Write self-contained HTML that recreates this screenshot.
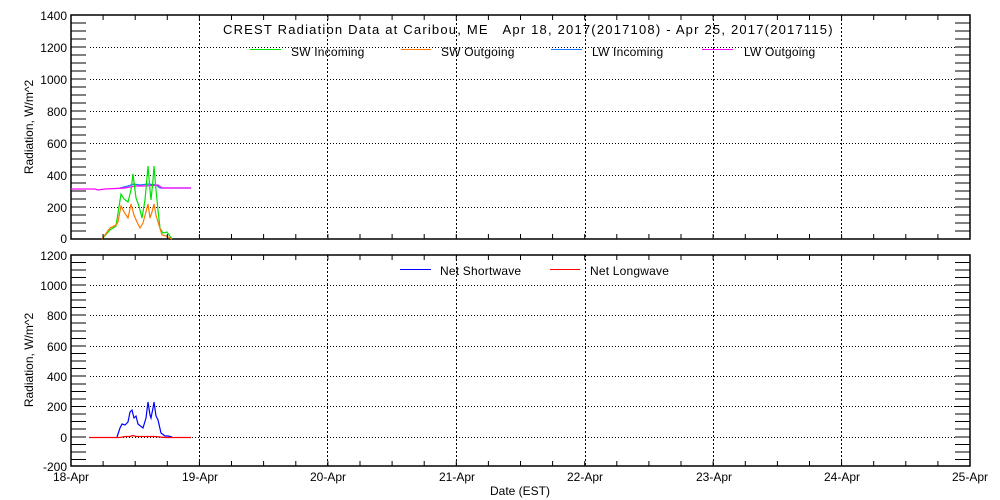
<!DOCTYPE html>
<html><head><style>
html,body{margin:0;padding:0;background:#fff;}
svg{display:block;font-family:"Liberation Sans",sans-serif;}
text{font-size:12px;fill:#000;}
</style></head><body>
<svg width="1000" height="500" viewBox="0 0 1000 500" xmlns="http://www.w3.org/2000/svg">
<g stroke="#000" stroke-width="1.5" fill="none">
<rect x="71" y="15" width="899" height="224"/>
<rect x="71" y="255" width="899" height="211"/>
</g>
<g stroke="#000" stroke-width="1" stroke-dasharray="2,2">
<line x1="199.5" y1="15" x2="199.5" y2="239"/><line x1="327.5" y1="15" x2="327.5" y2="239"/><line x1="456.5" y1="15" x2="456.5" y2="239"/><line x1="585.5" y1="15" x2="585.5" y2="239"/><line x1="713.5" y1="15" x2="713.5" y2="239"/><line x1="841.5" y1="15" x2="841.5" y2="239"/>
<line x1="199.5" y1="255" x2="199.5" y2="466"/><line x1="327.5" y1="255" x2="327.5" y2="466"/><line x1="456.5" y1="255" x2="456.5" y2="466"/><line x1="585.5" y1="255" x2="585.5" y2="466"/><line x1="713.5" y1="255" x2="713.5" y2="466"/><line x1="841.5" y1="255" x2="841.5" y2="466"/>
</g>
<g stroke="#000" stroke-width="1" stroke-dasharray="1,2">
<line x1="90" y1="47.5" x2="955" y2="47.5"/><line x1="90" y1="79.5" x2="955" y2="79.5"/><line x1="90" y1="111.5" x2="955" y2="111.5"/><line x1="90" y1="143.5" x2="955" y2="143.5"/><line x1="90" y1="175.5" x2="955" y2="175.5"/><line x1="90" y1="207.5" x2="955" y2="207.5"/>
<line x1="90" y1="285.5" x2="955" y2="285.5"/><line x1="90" y1="315.5" x2="955" y2="315.5"/><line x1="90" y1="346.5" x2="955" y2="346.5"/><line x1="90" y1="376.5" x2="955" y2="376.5"/><line x1="90" y1="406.5" x2="955" y2="406.5"/><line x1="90" y1="437.5" x2="955" y2="437.5"/>
</g>
<g fill="none" stroke-width="1.2">
<polyline stroke="#1e78ff" points="120,188 128,186 134,184 140,185 148,184 156,185 160,188 191,188"/>
<polyline stroke="#ff00ff" points="71,189 95,189 98,190 105,189 125,188 135,186 145,186 158,185 162,188 191,188"/>
<polyline stroke="#00e000" points="102,239 110,230 116,226 121,194 124,199 128,202 131,190 133,174 136,198 139,206 142,218 145,200 148,166 150,190 151,200 153,180 154,166 156,190 158,210 160,228 163,233 167,232 172,239"/>
<polyline stroke="#ff7800" points="102,239 110,228 116,225 118,222 121,206 124,212 128,218 131,204 134,215 137,222 140,228 143,223 148,204 150,218 152,212 154,204 156,215 158,222 162,235 166,236 172,239"/>
</g>
<g fill="none" stroke-width="1.2">
<polyline stroke="#0000ff" points="117,437 120,428 122,424 125,425 128,422 130,412 132,410 134,418 136,416 138,424 143,428 146,418 148,402 150,415 151,418 153,408 154,402 156,416 158,420 161,433 165,436 168,436 172,437"/>
<polyline stroke="#ff0000" points="89,437.5 120,437.5 125,436.5 130,436.5 133,435.5 136,436.5 145,436.5 155,436.5 165,437.5 191,437.5"/>
</g>
<g stroke-width="1">
<line x1="250" y1="49.5" x2="281" y2="49.5" stroke="#00e000"/>
<line x1="401" y1="49.5" x2="431" y2="49.5" stroke="#ff7800"/>
<line x1="551" y1="49.5" x2="582" y2="49.5" stroke="#1e78ff"/>
<line x1="702" y1="49.5" x2="733" y2="49.5" stroke="#ff00ff"/>
<line x1="400" y1="269.5" x2="431" y2="269.5" stroke="#0000ff"/>
<line x1="550" y1="269.5" x2="580" y2="269.5" stroke="#ff0000"/>
</g>
<text x="223" y="34" style="font-size:13px;letter-spacing:1.2px">CREST Radiation Data at Caribou, ME &#160; Apr 18, 2017(2017108) - Apr 25, 2017(2017115)</text>
<g style="letter-spacing:0.2px">
<text x="291" y="56">SW Incoming</text>
<text x="441" y="56">SW Outgoing</text>
<text x="592" y="56">LW Incoming</text>
<text x="744" y="56">LW Outgoing</text>
<text x="440" y="275">Net Shortwave</text>
<text x="590" y="275">Net Longwave</text>
</g>
<g text-anchor="end">
<text x="67" y="20">1400</text><text x="67" y="52">1200</text><text x="67" y="84">1000</text><text x="67" y="116">800</text><text x="67" y="148">600</text><text x="67" y="180">400</text><text x="67" y="212">200</text><text x="67" y="243">0</text>
<text x="67" y="260">1200</text><text x="67" y="290">1000</text><text x="67" y="320">800</text><text x="67" y="351">600</text><text x="67" y="381">400</text><text x="67" y="411">200</text><text x="67" y="442">0</text><text x="67" y="471">-200</text>
</g>
<text transform="translate(33,127) rotate(-90)" text-anchor="middle">Radiation, W/m^2</text>
<text transform="translate(33,360) rotate(-90)" text-anchor="middle">Radiation, W/m^2</text>
<g text-anchor="middle">
<text x="71" y="481">18-Apr</text><text x="200" y="481">19-Apr</text><text x="328" y="481">20-Apr</text><text x="457" y="481">21-Apr</text><text x="585" y="481">22-Apr</text><text x="714" y="481">23-Apr</text><text x="842" y="481">24-Apr</text><text x="970" y="481">25-Apr</text>
<text x="520" y="495">Date (EST)</text>
</g>
<g stroke="#000" stroke-width="1">
<path d="M71,23h15M71,31h15M71,39h15M71,47h15M71,55h15M71,63h15M71,71h15M71,79h15M71,87h15M71,95h15M71,103h15M71,111h15M71,119h15M71,127h15M71,135h15M71,143h15M71,151h15M71,159h15M71,167h15M71,175h15M71,183h15M71,191h15M71,199h15M71,207h15M71,215h15M71,223h15M71,231h15"/>
<path d="M970,23h-15M970,31h-15M970,39h-15M970,47h-15M970,55h-15M970,63h-15M970,71h-15M970,79h-15M970,87h-15M970,95h-15M970,103h-15M970,111h-15M970,119h-15M970,127h-15M970,135h-15M970,143h-15M970,151h-15M970,159h-15M970,167h-15M970,175h-15M970,183h-15M970,191h-15M970,199h-15M970,207h-15M970,215h-15M970,223h-15M970,231h-15"/>
<path d="M71,262.5h15M71,270h15M71,277.5h15M71,285h15M71,292.5h15M71,300h15M71,307.5h15M71,315h15M71,323h15M71,331h15M71,338.5h15M71,346h15M71,353.5h15M71,361h15M71,368.5h15M71,376h15M71,384h15M71,391.5h15M71,399h15M71,406.5h15M71,414h15M71,421.5h15M71,429h15M71,437h15M71,444.5h15M71,452h15M71,459.5h15"/>
<path d="M970,262.5h-15M970,270h-15M970,277.5h-15M970,285h-15M970,292.5h-15M970,300h-15M970,307.5h-15M970,315h-15M970,323h-15M970,331h-15M970,338.5h-15M970,346h-15M970,353.5h-15M970,361h-15M970,368.5h-15M970,376h-15M970,384h-15M970,391.5h-15M970,399h-15M970,406.5h-15M970,414h-15M970,421.5h-15M970,429h-15M970,437h-15M970,444.5h-15M970,452h-15M970,459.5h-15"/>
</g>
<g stroke="#000" stroke-width="1" id="xt"></g>
<script>
var g=document.getElementById('xt'),s='';
for(var i=1;i<28;i++){var x=(71+i*899/28).toFixed(1);
s+='M'+x+',239v-5M'+x+',15v5M'+x+',255v5M'+x+',466v-5';}
var p=document.createElementNS('http://www.w3.org/2000/svg','path');p.setAttribute('d',s);g.appendChild(p);
</script>
</svg>
</body></html>
